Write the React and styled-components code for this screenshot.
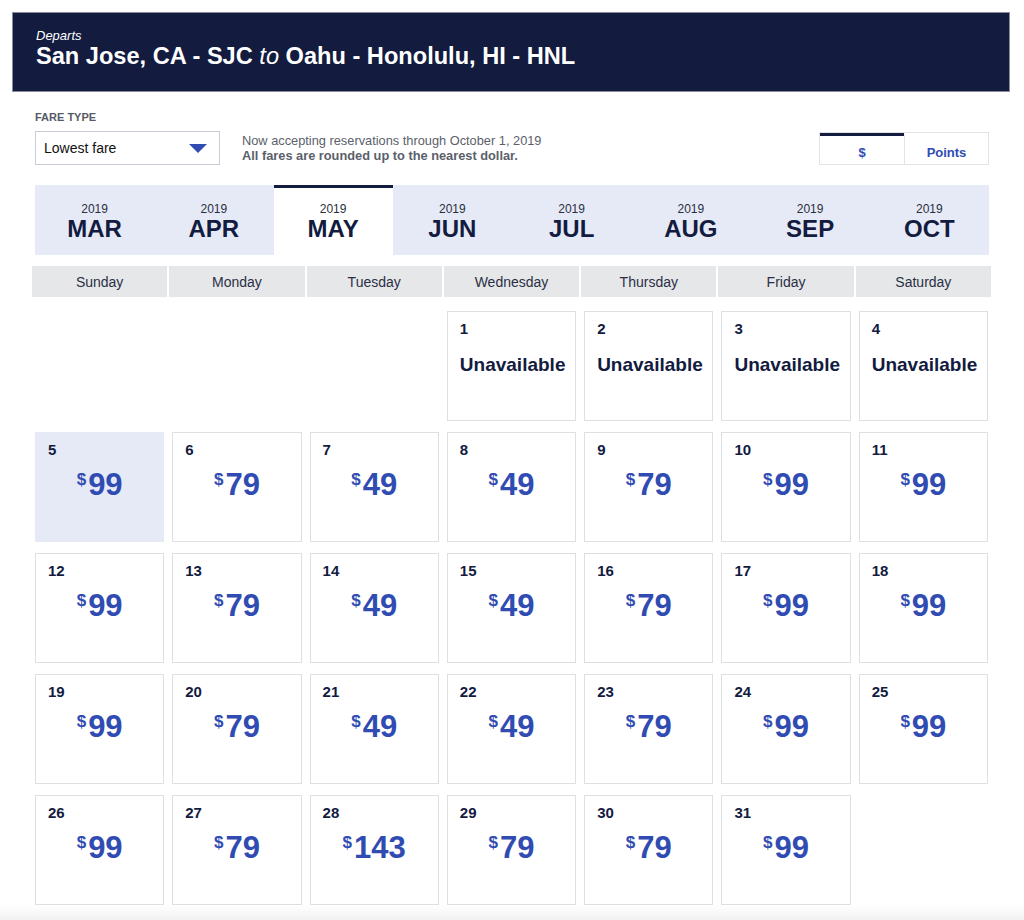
import React from "react";
import styled, { createGlobalStyle } from "styled-components";

const GlobalStyle = createGlobalStyle`
  body {
    margin: 0;
    background: #fff;
    font-family: "Liberation Sans", Arial, Helvetica, sans-serif;
  }
`;

const Page = styled.div`
  width: 1024px;
  height: 920px;
  overflow: hidden;
  padding-top: 12px;
  box-sizing: border-box;
  position: relative;
`;

const Banner = styled.header`
  margin-left: 12px;
  width: 998px;
  height: 80px;
  box-sizing: border-box;
  background: #131b3f;
  border: 1px solid #8a8d99;
  color: #fff;
  padding: 16px 0 0 23px;
`;

const Departs = styled.div`
  font-size: 13px;
  font-style: italic;
  line-height: 14px;
`;

const Route = styled.h1`
  margin: 0;
  font-size: 23.6px;
  font-weight: bold;
  line-height: 27px;
  em {
    font-weight: normal;
  }
`;

const Content = styled.div`
  padding-left: 32px;
`;

const FareRow = styled.div`
  display: flex;
  align-items: flex-start;
  height: 54px;
  padding: 19px 35px 0 3px;
`;

const FareLabel = styled.div`
  font-size: 11px;
  font-weight: bold;
  color: #555a66;
  line-height: 12px;
  margin-bottom: 8px;
`;

const Select = styled.div`
  width: 185px;
  height: 34px;
  box-sizing: border-box;
  border: 1px solid #c9ccd4;
  display: flex;
  align-items: center;
  justify-content: space-between;
  padding: 0 12px 0 8px;
  font-size: 14px;
  color: #111;
`;

const Caret = styled.span`
  width: 0;
  height: 0;
  border-left: 9px solid transparent;
  border-right: 9px solid transparent;
  border-top: 9px solid #304cb2;
`;

const Notes = styled.div`
  margin: 22px 0 0 22px;
  font-size: 12.8px;
  line-height: 15px;
  color: #5b5f6b;
  b {
    font-weight: bold;
  }
`;

const Toggle = styled.div`
  margin-left: auto;
  margin-top: 21px;
  display: flex;
  border: 1px solid #e2e3e7;
`;

const ToggleBtn = styled.div`
  width: 84px;
  height: 31px;
  box-sizing: border-box;
  display: flex;
  align-items: center;
  justify-content: center;
  padding-top: 4px;
  font-size: 13px;
  font-weight: bold;
  color: #304cb2;
  border-top: 3px solid ${(p) => (p.active ? "#131b3f" : "transparent")};
  & + & {
    border-left: 1px solid #e2e3e7;
  }
`;

const MonthBar = styled.div`
  display: flex;
  margin: 20px 0 0 3px;
  width: 954px;
  height: 70px;
  background: #e6eaf7;
`;

const Month = styled.div`
  flex: 1;
  display: flex;
  flex-direction: column;
  align-items: center;
  box-sizing: border-box;
  padding-top: ${(p) => (p.active ? "14px" : "17px")};
  background: ${(p) => (p.active ? "#fff" : "transparent")};
  border-top: ${(p) => (p.active ? "3px solid #131b3f" : "none")};
  color: #131b3f;
`;

const Year = styled.span`
  font-size: 12px;
  line-height: 14px;
  color: #2a2f3d;
`;

const MonthName = styled.span`
  font-size: 24px;
  font-weight: bold;
  line-height: 26px;
`;

const Grid = styled.div`
  display: grid;
  width: 959px;
  grid-template-columns: repeat(7, 1fr);
  column-gap: 2px;
  margin-top: 11px;
`;

const DayHead = styled.div`
  height: 31px;
  background: #e6e7e9;
  display: flex;
  align-items: center;
  justify-content: center;
  font-size: 14px;
  color: #2a2f45;
  margin-bottom: 14px;
`;

const Cell = styled.div`
  margin: 0 3px 11px;
  height: 110px;
  box-sizing: border-box;
  border: 1px solid ${(p) => (p.selected ? "#e6eaf7" : "#dedfe3")};
  background: ${(p) => (p.selected ? "#e6eaf7" : "#fff")};
  padding: 8px 0 0 12px;
  color: #131b3f;
`;

const Empty = styled.div``;

const DateNum = styled.div`
  font-size: 15px;
  font-weight: bold;
  line-height: 17px;
`;

const Price = styled.div`
  display: flex;
  justify-content: center;
  align-items: flex-start;
  margin: 10px 12px 0 0;
  color: #304cb2;
  font-weight: bold;
  sup {
    font-size: 17px;
    line-height: 18px;
    margin: 3px 2px 0 0;
  }
  span {
    font-size: 31px;
    line-height: 34px;
  }
`;

const Unavailable = styled.div`
  margin-top: 17px;
  font-size: 19px;
  font-weight: bold;
  line-height: 21px;
  color: #131b3f;
`;

const Fade = styled.div`
  position: absolute;
  left: 0;
  right: 0;
  bottom: 0;
  height: 15px;
  background: linear-gradient(#fff, #f2f2f3);
`;

const months = ["MAR", "APR", "MAY", "JUN", "JUL", "AUG", "SEP", "OCT"];
const days = ["Sunday", "Monday", "Tuesday", "Wednesday", "Thursday", "Friday", "Saturday"];
const weekPrices = [99, 79, 49, 49, 79, 99, 99];
const lastWeek = [99, 79, 143, 79, 79, 99];

function buildCells() {
  const cells = [null, null, null];
  for (let d = 1; d <= 4; d++) cells.push({ d, unavailable: true });
  for (let d = 5; d <= 25; d++) cells.push({ d, price: weekPrices[(d - 5) % 7] });
  lastWeek.forEach((price, i) => cells.push({ d: 26 + i, price }));
  return cells;
}

export default function App() {
  const cells = buildCells();
  return (
    <Page>
      <GlobalStyle />
      <Banner>
        <Departs>Departs</Departs>
        <Route>
          San Jose, CA - SJC <em>to</em> Oahu - Honolulu, HI - HNL
        </Route>
      </Banner>
      <Content>
        <FareRow>
          <div>
            <FareLabel>FARE TYPE</FareLabel>
            <Select>
              Lowest fare
              <Caret />
            </Select>
          </div>
          <Notes>
            Now accepting reservations through October 1, 2019
            <br />
            <b>All fares are rounded up to the nearest dollar.</b>
          </Notes>
          <Toggle>
            <ToggleBtn active>$</ToggleBtn>
            <ToggleBtn>Points</ToggleBtn>
          </Toggle>
        </FareRow>
        <MonthBar>
          {months.map((m) => (
            <Month key={m} active={m === "MAY"}>
              <Year>2019</Year>
              <MonthName>{m}</MonthName>
            </Month>
          ))}
        </MonthBar>
        <Grid>
          {days.map((d) => (
            <DayHead key={d}>{d}</DayHead>
          ))}
          {cells.map((c, i) =>
            c === null ? (
              <Empty key={i} />
            ) : (
              <Cell key={i} selected={c.d === 5}>
                <DateNum>{c.d}</DateNum>
                {c.unavailable ? (
                  <Unavailable>Unavailable</Unavailable>
                ) : (
                  <Price>
                    <sup>$</sup>
                    <span>{c.price}</span>
                  </Price>
                )}
              </Cell>
            )
          )}
        </Grid>
      </Content>
      <Fade />
    </Page>
  );
}
